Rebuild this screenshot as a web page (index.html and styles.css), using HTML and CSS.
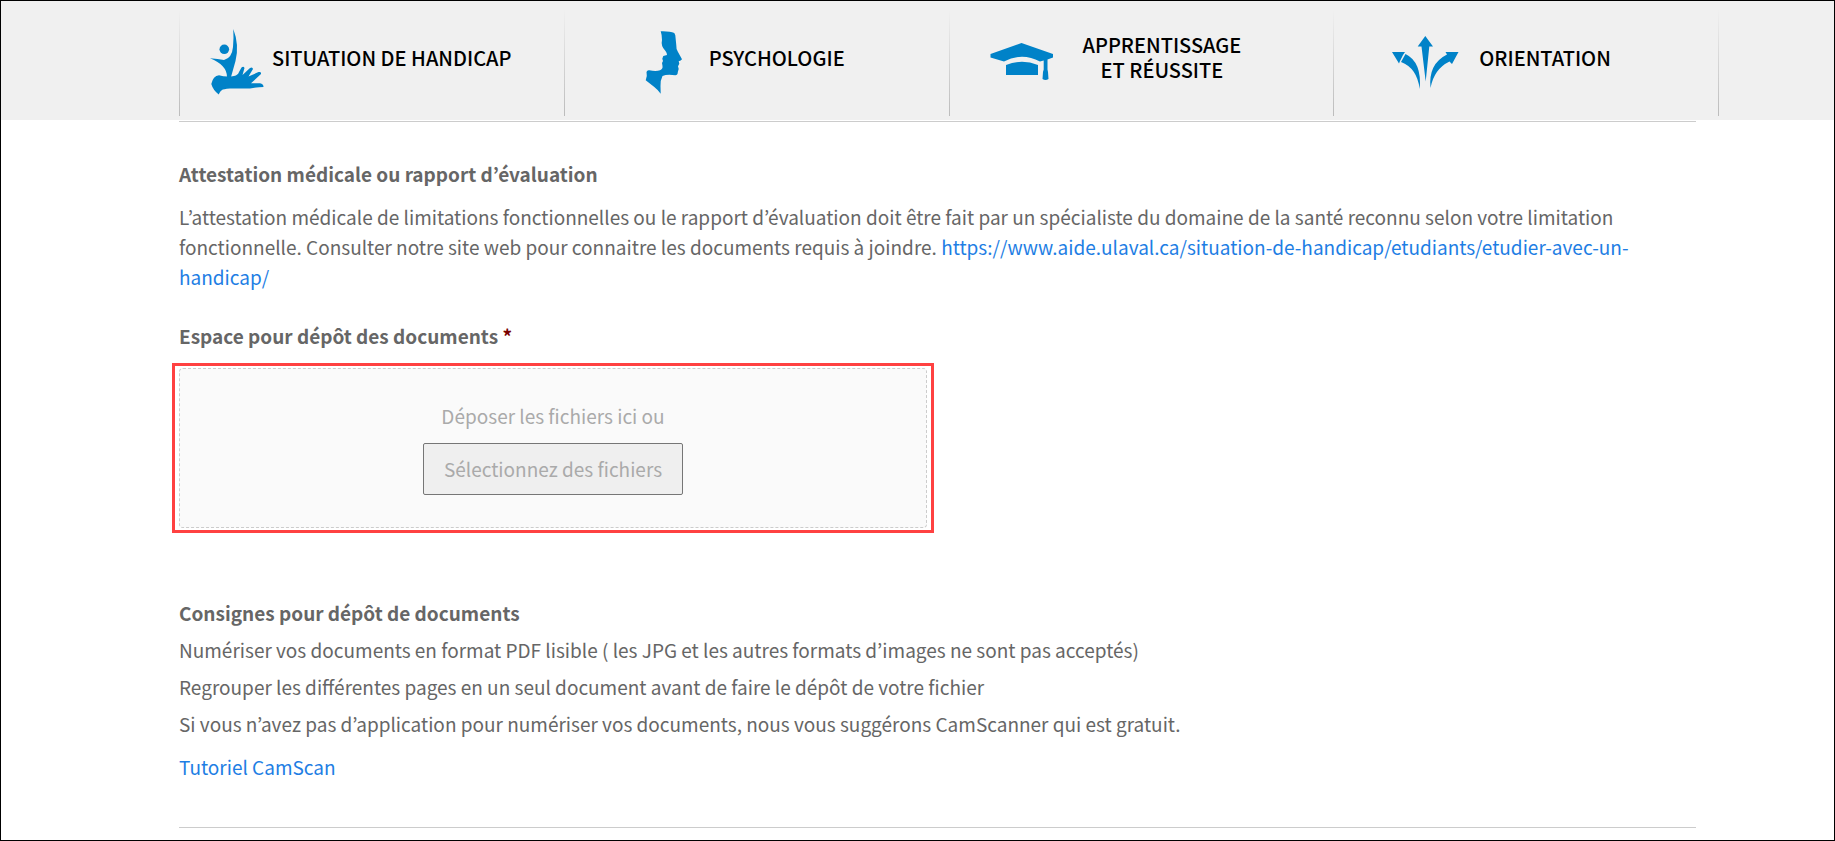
FILE: index.html
```html
<!DOCTYPE html>
<html lang="fr">
<head>
    <meta charset="UTF-8">
    <meta name="viewport" content="width=device-width, initial-scale=1.0">
    <title>Centre d'aide - Dépôt de documents</title>
    <link rel="stylesheet" href="styles.css">
</head>
<body>

<header>
    <nav class="menu">
        <a class="menu-item handicap" href="#">
            <svg width="54" height="66" viewBox="0 0 54 66">
                <circle cx="14.3" cy="20.3" r="4.8"/>
                <path d="M23.3 0Q29.5 16 25.5 32L21 48H17Q17 36 0 29.3Q8 30 14 31Q22 29 23 18Q23.8 8 23.3 0Z"/>
                <path d="M1.3 55Q3 47 9 46.3Q16 48.5 24 47Q28 46 29 43L31.5 38.5Q33.5 36.8 34.5 39L32.5 46L40 39Q42.5 37.5 43 40L38.5 47.5L48.5 43Q51.5 42.5 51 45L41 54.3H50Q53.5 55 53.5 58Q48 58 40 59.5H20Q13 60 12 61Q10 62 8.7 65.5Q3 61 1.3 55Z"/>
            </svg>
            <span>SITUATION DE HANDICAP</span>
        </a>
        <a class="menu-item psychologie" href="#">
            <svg width="38" height="63" viewBox="0 0 38 63">
                <path d="M15.7 0.3Q25 0 29.3 2L30.3 4.3L31.3 14.3Q31 18 33 21L37 28.3Q36 30 33.7 30.3L34.3 32.7L33 35.3Q34.5 38 32.8 41Q33 44 30.3 44.3Q22 43 17.5 45Q15 50 15.5 55L15.7 62.7Q12 58 9.3 56L0.7 49.3Q2.5 45 1.5 41Q2 39 4.3 39.3Q11 40.5 15 39.3Q18 38 17.5 35L17 32L18 30L17.3 27.7L18.3 25L22 24Q22 22 20.5 20Q15.5 15 17 9Q17 4 15.7 0.3Z"/>
            </svg>
            <span>PSYCHOLOGIE</span>
        </a>
        <a class="menu-item apprentissage" href="#">
            <svg width="64" height="38" viewBox="0 0 64 38">
                <path d="M31.5 0L63 11V14.5L57.5 16.5V26.5L58 29L58.5 36Q55.5 38 52.5 36L53 29L53.7 26.5V17.5L50 18.5Q32 9 14 18.5L0.5 14.5V11Z"/>
                <path d="M16 22Q32 15.5 48 22V32H16Z"/>
            </svg>
            <span>APPRENTISSAGE<br>ET RÉUSSITE</span>
        </a>
        <a class="menu-item orientation" href="#">
            <svg width="67" height="53" viewBox="0 0 67 53">
                <path d="M33.3 0L41 10.5H37.3L33.7 45.5L29.5 10.5H25.7Z"/>
                <path d="M0 16H13L11 19L8 25L7 27.5Z"/>
                <path d="M13.5 18Q30 26 27.7 53Q25 32 9 26Z"/>
                <path d="M66.5 16L60 28L57.5 25.5Q42 33 38.5 52Q36 28 55 18.5L53.5 16Z"/>
            </svg>
            <span>ORIENTATION</span>
        </a>
    </nav>
</header>

<main>
    <section class="attestation">
        <h2>Attestation médicale ou rapport d’évaluation</h2>
        <p>L’attestation médicale de limitations fonctionnelles ou le rapport d’évaluation doit être fait par un spécialiste du domaine de la santé reconnu selon votre limitation fonctionnelle. Consulter notre site web pour connaitre les documents requis à joindre. <a href="#">https://www.aide.ulaval.ca/situation-de-handicap/etudiants/etudier-avec-un-handicap/</a></p>
    </section>

    <section class="depot">
        <h2 id="depot-label">Espace pour dépôt des documents <span class="required">*</span></h2>
        <div class="highlight">
            <div class="drop-area">
                <span>Déposer les fichiers ici ou</span>
                <button type="button" aria-describedby="depot-label">Sélectionnez des fichiers</button>
            </div>
        </div>
    </section>

    <section class="consignes">
        <h2>Consignes pour dépôt de documents</h2>
        <ul>
            <li>Numériser vos documents en format PDF lisible ( les JPG et les autres formats d’images ne sont pas acceptés)</li>
            <li>Regrouper les différentes pages en un seul document avant de faire le dépôt de votre fichier</li>
            <li>Si vous n’avez pas d’application pour numériser vos documents, nous vous suggérons CamScanner qui est gratuit.</li>
        </ul>
        <a href="#">Tutoriel CamScan</a>
    </section>
</main>

</body>
</html>
```
FILE: styles.css
```css
* {
    box-sizing: border-box;
}
body {
    font-family: "Noto Sans CJK KR", "Noto Sans", sans-serif;
    font-size: 19px;
    line-height: 30px;
    color: #666;
    background-color: #fff;
    margin: 0;
    border: 1px solid #000;
}
a {
    color: #1e7ee4;
    text-decoration: none;
}
header {
    background-color: #f0f0f0;
    padding: 9px 115px 4px 178px;
}

/* Main menu */
.menu {
    display: grid;
    grid-template-columns: repeat(4, 1fr);
    min-height: 106px;
    border-right: 1px solid;
    border-image: linear-gradient(#f0f0f0, #bbb) 1;
}
.menu-item {
    display: flex;
    align-items: center;
    border-left: 1px solid;
    border-image: linear-gradient(#f0f0f0, #bbb) 1;
    color: #000;
    font-size: 20px;
    font-weight: 500;
    line-height: 25px;
    text-align: center;
    padding-bottom: 2px;
}
.menu-item svg {
    flex: none;
    fill: #0082c8;
}
.menu-item span {
    padding-bottom: 10px;
}
.handicap {
    gap: 8px;
    padding-left: 30px;
}
.psychologie {
    gap: 26px;
    padding-left: 80px;
}
.apprentissage {
    gap: 29px;
    padding-left: 40px;
}
.orientation {
    gap: 20px;
    padding-left: 58px;
}

/* Form */
main {
    margin: 1px 138px 12px 178px;
    border-top: 1px solid #ccc;
    border-bottom: 1px solid #ccc;
    padding: 37px 0 45px;
}
h2 {
    font-size: 19px;
    font-weight: bold;
    margin: 0 0 13px;
}
p {
    margin: 0;
}
.depot {
    margin: 29px 0 65px;
}
.depot h2 {
    margin-bottom: 12px;
}
.required {
    color: #790000;
}
.highlight {
    width: 762px;
    max-width: 100%;
    margin-left: -7px;
    padding: 2px 4px;
    border: 3px solid #ff4141;
}
.drop-area {
    display: flex;
    flex-direction: column;
    align-items: center;
    gap: 12px;
    padding: 32px;
    border: 1px dashed #ccc;
    border-radius: 4px;
    background-color: #fafafa;
    color: #aaa;
}
button {
    font: inherit;
    color: #aaa;
    background-color: #efefef;
    border: 1px solid #767676;
    border-radius: 2px;
    padding: 10px 20px;
    cursor: pointer;
}
.consignes h2 {
    margin-bottom: 7px;
}
ul {
    list-style: none;
    margin: 0 0 13px;
    padding: 0;
}
li + li {
    margin-top: 7px;
}
```
